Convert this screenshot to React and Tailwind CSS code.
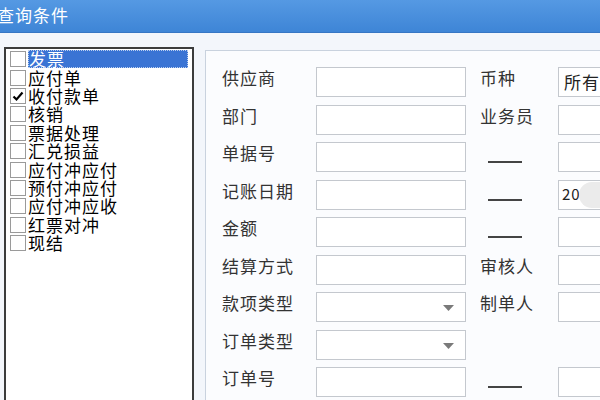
import React from 'react'

const types = [
  { name: '发票', selected: true },
  { name: '应付单' },
  { name: '收付款单', checked: true },
  { name: '核销' },
  { name: '票据处理' },
  { name: '汇兑损益' },
  { name: '应付冲应付' },
  { name: '预付冲应付' },
  { name: '应付冲应收' },
  { name: '红票对冲' },
  { name: '现结' },
]

// left label, left field kind, middle item, right field kind
const rows = [
  { label: '供应商', left: 'input', mid: '币种', right: 'select' },
  { label: '部门', left: 'input', mid: '业务员', right: 'input' },
  { label: '单据号', left: 'input', mid: 'dash', right: 'input' },
  { label: '记账日期', left: 'input', mid: 'dash', right: 'date' },
  { label: '金额', left: 'input', mid: 'dash', right: 'input' },
  { label: '结算方式', left: 'input', mid: '审核人', right: 'input' },
  { label: '款项类型', left: 'combo', mid: '制单人', right: 'input' },
  { label: '订单类型', left: 'combo', mid: null, right: null },
  { label: '订单号', left: 'input', mid: 'dash', right: 'input' },
]

const font = { fontFamily: '"Noto Sans CJK SC", "Noto Sans", sans-serif' }

function CheckBox({ checked }) {
  return (
    <span className="w-[16px] h-[16px] shrink-0 border border-[#9a9a9a] bg-white flex items-center justify-center">
      {checked && (
        <svg width="12" height="12" viewBox="0 0 12 12">
          <path d="M1.5 6.5 L4.5 9.5 L10.5 2.5" fill="none" stroke="#000" strokeWidth="2.2" />
        </svg>
      )}
    </span>
  )
}

function Field({ kind }) {
  if (!kind) return <div className="w-[150px] h-[30px] shrink-0" />
  return (
    <div className="relative w-[150px] h-[30px] shrink-0 border border-[#c4c8ce] bg-white flex items-center overflow-hidden">
      {kind === 'select' && <span className="pl-[5px] text-[17px] text-[#222] tracking-[1px]">所有</span>}
      {kind === 'date' && (
        <>
          <span className="pl-[3px] text-[15px] text-[#222]">20</span>
          <span className="absolute left-[20px] top-[1px] w-[60px] h-[26px] rounded-l-full bg-[#ebebeb]" />
        </>
      )}
      {kind === 'combo' && (
        <svg className="absolute right-[11px] top-[12px]" width="11" height="6" viewBox="0 0 11 6">
          <path d="M0 0 H11 L5.5 6 Z" fill="#7a7a7a" />
        </svg>
      )}
    </div>
  )
}

export default function App() {
  return (
    <div className="w-[600px] h-[400px] overflow-hidden bg-[#f3f6fb]" style={font}>
      {/* Title bar */}
      <div className="h-[33px] bg-gradient-to-b from-[#5599e3] to-[#3e85d6] border-b border-[#3676c4] flex items-start">
        <span className="ml-[-3px] mt-[2px] text-[17px] text-white tracking-[1px]">查询条件</span>
      </div>

      <div className="flex items-start">
        {/* Type list */}
        <div className="ml-[4px] mt-[14px] w-[190px] h-[400px] border-2 border-[#3c3c3c] bg-white pt-[1px] pl-[4px] pr-[4px] shrink-0">
          {types.map((t) => (
            <div key={t.name} className="h-[18.4px] flex items-center text-[17px] leading-[18px] tracking-[1px] text-black">
              <CheckBox checked={t.checked} />
              <span
                className={
                  t.selected
                    ? 'ml-[2px] flex-1 h-full flex items-center bg-[#3a74d4] text-white border border-dotted border-[#bcd0f0]'
                    : 'ml-[2px]'
                }
              >
                {t.name}
              </span>
            </div>
          ))}
        </div>

        {/* Condition panel */}
        <div className="ml-[11px] mt-[17px] w-[420px] h-[400px] shrink-0 border border-[#c9d2de] bg-[#fbfcfe] pl-[16px] pt-[16px]">
          {rows.map((r) => (
            <div key={r.label} className="h-[37.5px] flex items-start text-[17px] tracking-[1px] text-[#333]">
              <div className="w-[94px] h-[30px] shrink-0 flex items-center -mt-[4px]">{r.label}</div>
              <Field kind={r.left} />
              <div className="w-[92px] h-[30px] shrink-0 pl-[14px] flex items-center">
                {r.mid === 'dash' ? (
                  <span className="ml-[8px] mt-[10px] w-[34px] h-[2px] bg-[#444]" />
                ) : (
                  <span className="-mt-[8px]">{r.mid}</span>
                )}
              </div>
              <Field kind={r.right} />
            </div>
          ))}
        </div>
      </div>
    </div>
  )
}
